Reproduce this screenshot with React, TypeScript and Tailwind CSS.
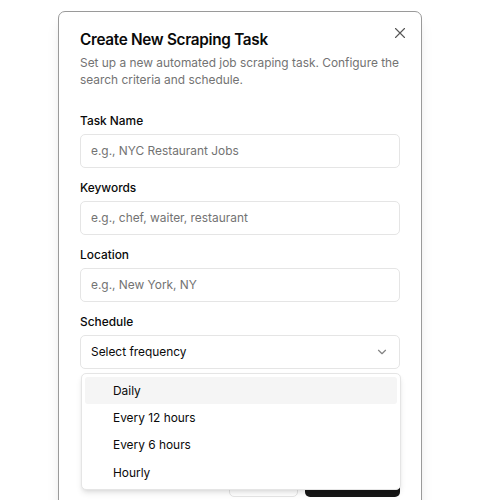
import React from "react";

function Field({ label, placeholder }: { label: string; placeholder: string }) {
  return (
    <div className="flex flex-col gap-[7px]">
      <label className="text-[11.9px] leading-[12px] font-medium text-[#0a0a0a]">{label}</label>
      <div className="h-[34px] rounded-[5px] border border-[#e5e5e5] bg-white px-[10px] flex items-center text-[11.9px] text-[#737373]">
        {placeholder}
      </div>
    </div>
  );
}

export default function App() {
  const items = ["Daily", "Every 12 hours", "Every 6 hours", "Hourly"];
  return (
    <div
      className="w-full h-[500px] overflow-hidden bg-white flex justify-center pt-[11px]"
      style={{ fontFamily: "Inter, 'Noto Sans', sans-serif" }}
    >
      <div className="relative w-[364px] h-[560px] shrink-0 rounded-[7px] border border-[#9a9a9a] bg-white px-[21px] pt-[20px] shadow-lg">
        <button className="absolute top-[15px] right-[15px] w-[12px] h-[12px] text-[#555]">
          <svg width="12" height="12" viewBox="0 0 12 12" fill="none" stroke="currentColor" strokeWidth="1.1" strokeLinecap="round">
            <path d="M1.5 1.5 10.5 10.5M10.5 1.5 1.5 10.5" />
          </svg>
        </button>
        <div className="flex flex-col gap-[5px]">
          <h2 className="text-[15.3px] leading-[16px] font-semibold tracking-[-0.3px] text-[#0a0a0a]">
            Create New Scraping Task
          </h2>
          <p className="text-[11.9px] leading-[17px] text-[#737373] pt-[1px]">
            Set up a new automated job scraping task. Configure the search criteria and schedule.
          </p>
        </div>
        <div className="flex flex-col gap-[14px] pt-[27px]">
          <Field label="Task Name" placeholder="e.g., NYC Restaurant Jobs" />
          <Field label="Keywords" placeholder="e.g., chef, waiter, restaurant" />
          <Field label="Location" placeholder="e.g., New York, NY" />
          <div className="flex flex-col gap-[7px]">
            <label className="text-[11.9px] leading-[12px] font-medium text-[#0a0a0a]">Schedule</label>
            <div className="relative">
              <div className="h-[34px] rounded-[5px] border border-[#e5e5e5] bg-white pl-[10px] pr-[10px] flex items-center justify-between text-[11.9px] text-[#0a0a0a]">
                <span>Select frequency</span>
                <svg width="14" height="14" viewBox="0 0 24 24" fill="none" stroke="currentColor" strokeWidth="2" strokeLinecap="round" strokeLinejoin="round" className="opacity-50">
                  <path d="m6 9 6 6 6-6" />
                </svg>
              </div>
              <div className="absolute z-10 left-[1px] right-[-1px] top-[38px] rounded-[5px] border border-[#e5e5e5] bg-white p-[3px] shadow-md">
                {items.map((it, i) => (
                  <div
                    key={it}
                    className={
                      "h-[27.3px] rounded-[3px] pl-[28px] flex items-center text-[11.9px] text-[#0a0a0a] " +
                      (i === 0 ? "bg-[#f5f5f5]" : "")
                    }
                  >
                    {it}
                  </div>
                ))}
              </div>
            </div>
          </div>
          <div className="h-[80px]" />
        </div>
        <div className="flex justify-end gap-[7px]">
          <button className="h-[34px] w-[69px] rounded-[5px] border border-[#e5e5e5] bg-white text-[11.9px] font-medium text-[#0a0a0a]">
            Cancel
          </button>
          <button className="h-[34px] w-[95px] rounded-[5px] bg-[#171717] text-[11.9px] font-medium text-white">
            Create Task
          </button>
        </div>
      </div>
    </div>
  );
}
